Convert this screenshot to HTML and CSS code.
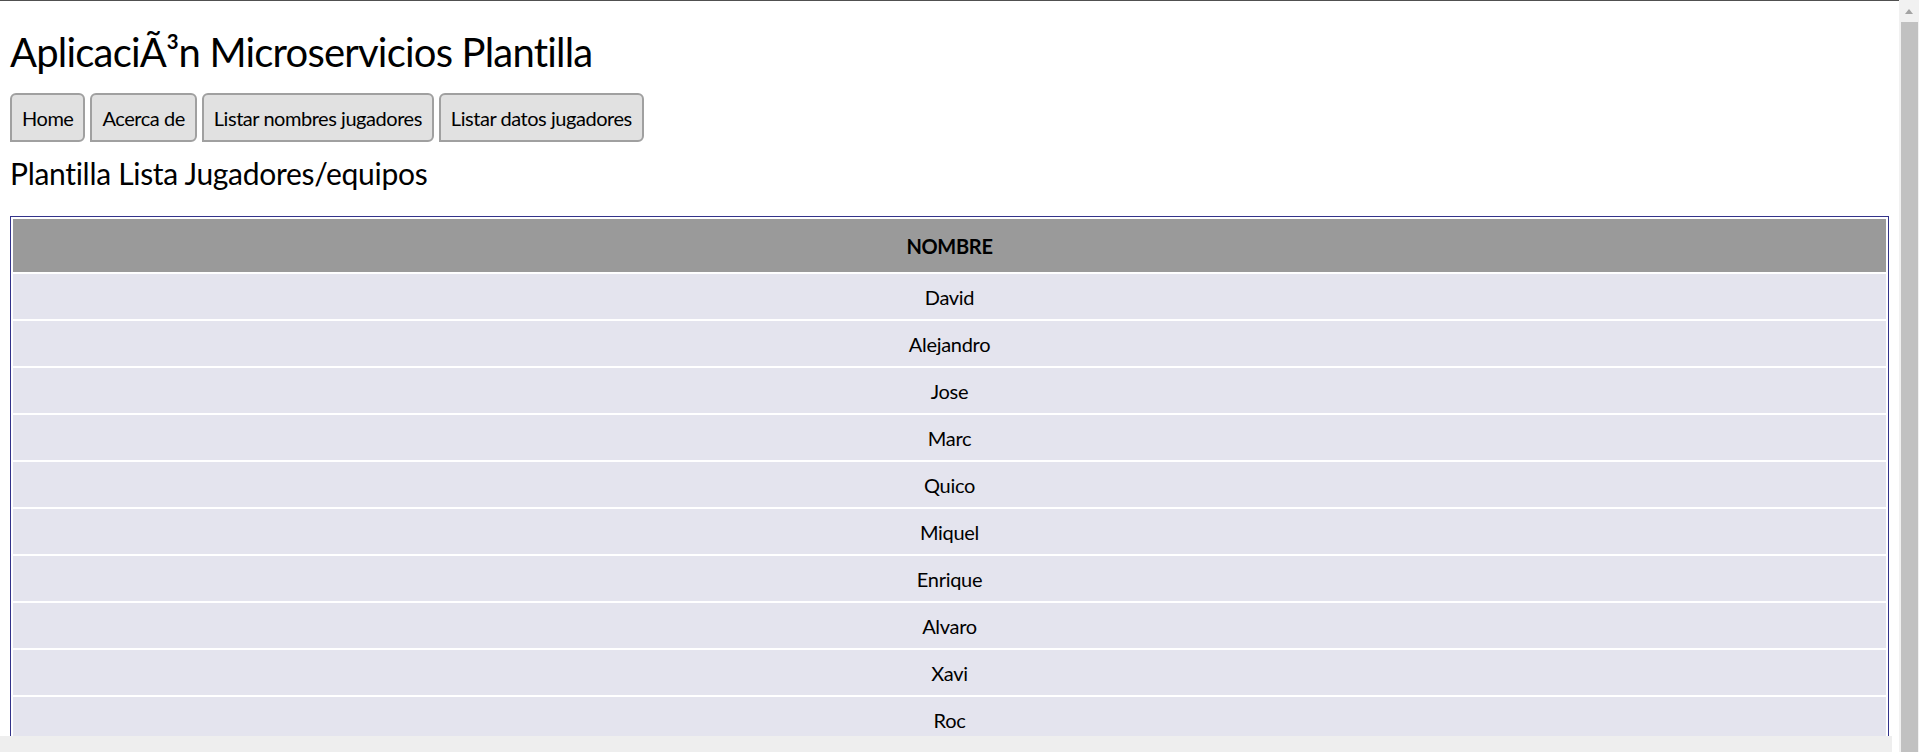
FILE: index.html
```html
<!DOCTYPE html>
<html lang="es">
<head>
<meta charset="utf-8">
<title>Plantilla</title>
<link rel="stylesheet" href="styles.css">
</head>
<body>
<div class="topline"></div>
<div class="page">
  <h1 class="title">AplicaciÃ³n Microservicios Plantilla</h1>
  <nav class="menu">
    <a class="btn" href="#">Home</a>
    <a class="btn" href="#">Acerca de</a>
    <a class="btn" href="#">Listar nombres jugadores</a>
    <a class="btn" href="#">Listar datos jugadores</a>
  </nav>
  <h2 class="subtitle">Plantilla Lista Jugadores/equipos</h2>
  <table class="grid">
    <thead>
      <tr><th>NOMBRE</th></tr>
    </thead>
    <tbody>
      <tr><td>David</td></tr>
      <tr><td>Alejandro</td></tr>
      <tr><td>Jose</td></tr>
      <tr><td>Marc</td></tr>
      <tr><td>Quico</td></tr>
      <tr><td>Miquel</td></tr>
      <tr><td>Enrique</td></tr>
      <tr><td>Alvaro</td></tr>
      <tr><td>Xavi</td></tr>
      <tr><td>Roc</td></tr>
    </tbody>
  </table>
</div>
<div class="vscroll"><div class="vscroll-up"></div><div class="vscroll-thumb"></div></div>
<div class="hscroll"></div>
</body>
</html>
```
FILE: styles.css
```css
html, body {
  margin: 0;
  padding: 0;
  height: 100%;
  overflow: hidden;
  background: #fff;
}
body {
  font-family: "Lato", "Liberation Sans", sans-serif;
  font-variant-ligatures: none;
  letter-spacing: -0.015em;
  color: #000;
  font-size: 20px;
}
.topline {
  height: 1px;
  background: #505050;
  margin-right: 20px;
}
.page {
  padding: 0 30px 0 10px;
  display: flex;
  flex-direction: column;
  align-items: flex-start;
}
.title {
  font-size: 40px;
  font-weight: 400;
  line-height: 50px;
  letter-spacing: -0.02em;
  margin: 26px 0 0 0;
}
.menu {
  display: flex;
  gap: 5px;
  margin-top: 16px;
}
.btn {
  display: flex;
  align-items: center;
  height: 49px;
  box-sizing: border-box;
  padding: 0 10px;
  border: 2px solid #a0a0a0;
  border-radius: 6px 6px 6px 0;
  background: #e1e1e1;
  color: #000;
  text-decoration: none;
  font-size: 20px;
  letter-spacing: -0.023em;
}
.subtitle {
  font-size: 30px;
  font-weight: 400;
  line-height: 38px;
  letter-spacing: -0.01em;
  margin: 12px 0 0 0;
}
.grid {
  align-self: stretch;
  margin-top: 24px;
  border: 1px solid #33338a;
  border-spacing: 2px;
  font-size: 20px;
}
.grid th {
  background: #9a9a9a;
  height: 53px;
  padding: 0;
  font-weight: 700;
  text-align: center;
}
.grid td {
  background: #e4e4ee;
  height: 45px;
  padding: 0;
  text-align: center;
}
.vscroll {
  position: fixed;
  top: 0;
  right: 0;
  width: 20px;
  height: 100%;
  background: #f1f1f1;
  display: flex;
  flex-direction: column;
  align-items: flex-end;
}
.vscroll-up {
  height: 22px;
  width: 18px;
  position: relative;
}
.vscroll-up::after {
  content: "";
  position: absolute;
  left: 4px;
  top: 9px;
  border-left: 4px solid transparent;
  border-right: 4px solid transparent;
  border-bottom: 5px solid #a3a3a3;
}
.vscroll-thumb {
  flex: 1;
  width: 17px;
  margin-right: 1px;
  background: #c1c1c1;
}
.hscroll {
  position: fixed;
  left: 0;
  bottom: 0;
  width: 1892px;
  height: 16px;
  background: #eeeeee;
}
```
